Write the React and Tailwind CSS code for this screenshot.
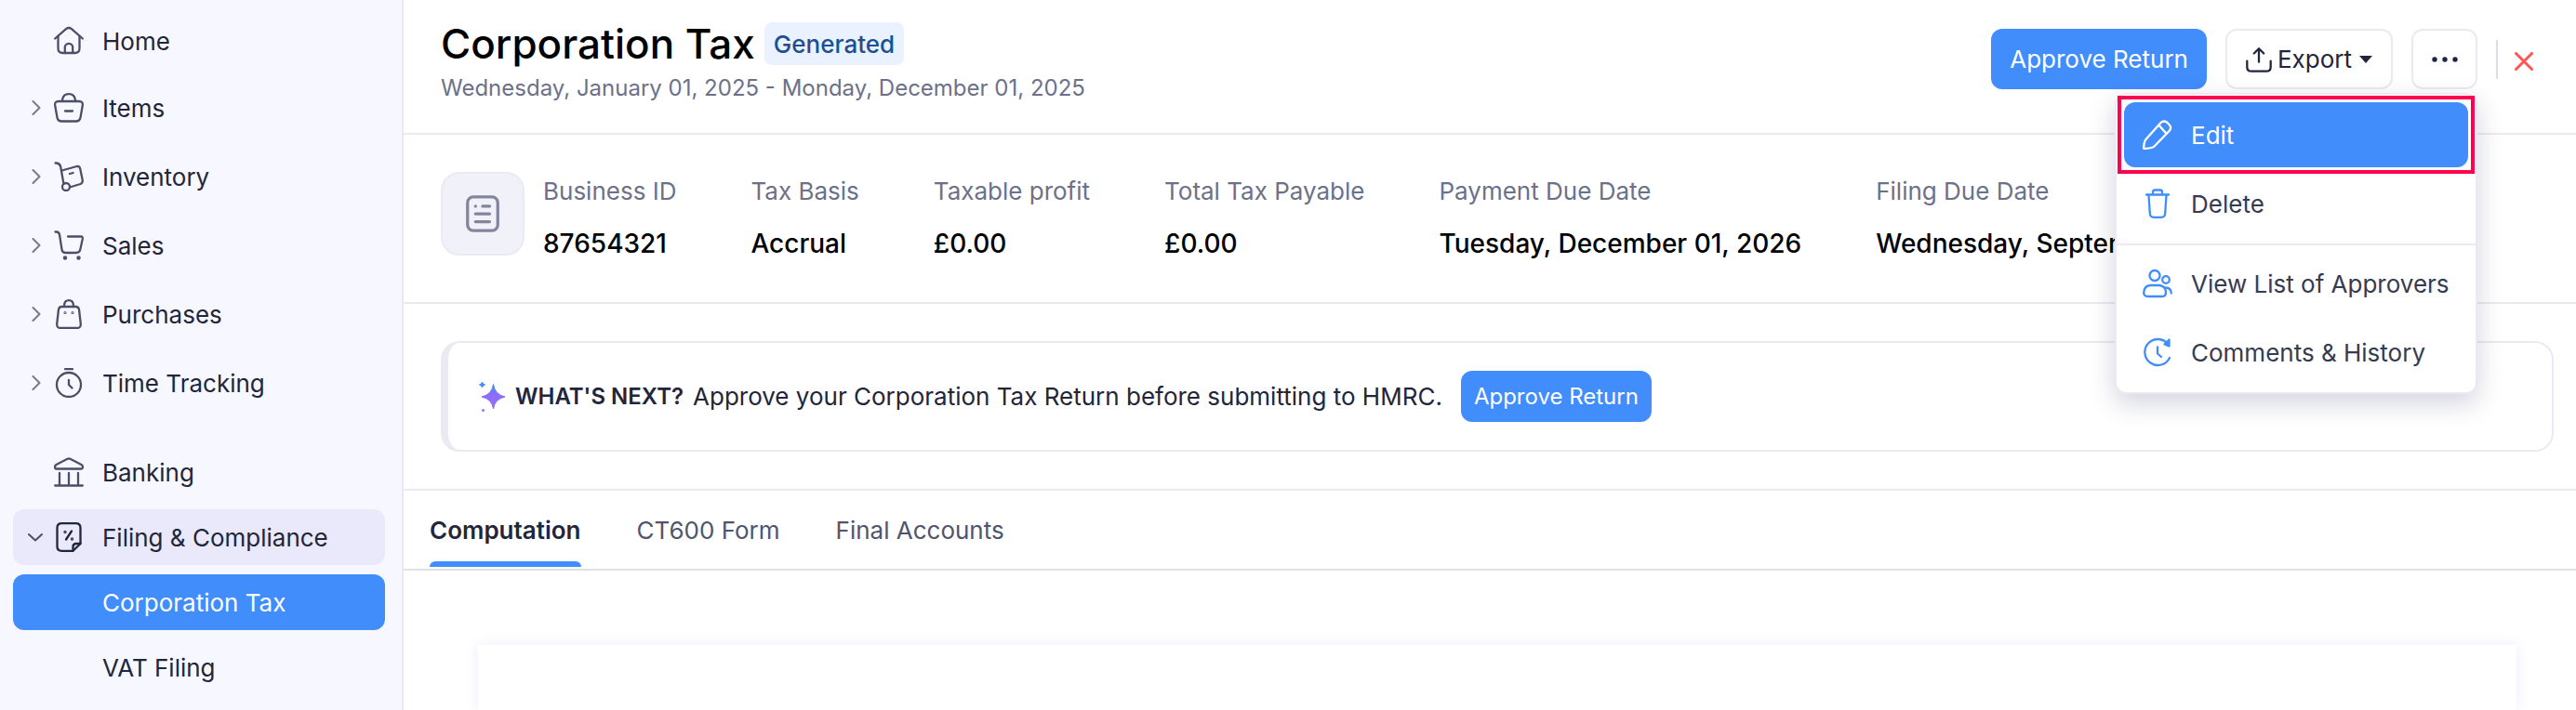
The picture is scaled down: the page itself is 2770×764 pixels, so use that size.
const Icon = ({ children, size = 32, width = 2.3, className = 'text-[#4b4f68]' }) => (
  <svg
    width={size}
    height={size}
    viewBox="0 0 32 32"
    fill="none"
    stroke="currentColor"
    strokeWidth={width}
    strokeLinecap="round"
    strokeLinejoin="round"
    className={`shrink-0 ${className}`}
    aria-hidden="true"
  >
    {children}
  </svg>
);

const icons = {
  home: (
    <>
      <path d="M1.200 13.500 13 3.200Q16 .8 19 3.200L30.800 13.500" />
      <path d="M4.500 11V24Q4.500 29 9.500 29H22.500Q27.500 29 27.500 24V11" />
      <path d="M11.800 29V23A4.200 4.200 0 0 1 20.200 23V29" />
    </>
  ),
  items: (
    <>
      <path d="M9 9V7.500Q10 1.200 16 1.200T23 7.500V9" />
      <path d="M5 9H27Q31.500 9 30.800 13.500L28.500 26.500Q27.800 30.500 23.500 30.500H8.500Q4.200 30.500 3.500 26.500L1.200 13.500Q.5 9 5 9Z" />
      <path d="M12 19.500H20" />
    </>
  ),
  inventory: (
    <>
      <path d="M1.500 1.500H3Q6.500 2 7.200 5.500L10.500 24" />
      <path d="M8.500 9.500 24.500 5Q27.500 4.500 28.200 7.500L30.800 20Q31 23 28.500 24L17 27.500" />
      <path d="M17 13 20.500 12" />
      <circle cx="13" cy="27" r="4" />
    </>
  ),
  sales: (
    <>
      <path d="M1.500 1.500H2.500Q5.500 1.500 6 4.500L8.500 20.500Q9 24 12.500 24H24Q27.500 24 28.300 20.500L30.800 9Q31.200 6.500 29 6.500H15" />
      <circle cx="12" cy="29.500" r="1.100" fill="currentColor" />
      <circle cx="26.500" cy="29.500" r="1.100" fill="currentColor" />
    </>
  ),
  purchases: (
    <>
      <path d="M11 8V6.500Q11.500 1.200 16 1.200T21 6.500V8" />
      <path d="M8.500 8H23.500Q26.500 8 27 11L28.800 26.500Q29 31 25 31H7Q3 31 3.200 26.500L5 11Q5.500 8 8.500 8Z" />
      <circle cx="12" cy="14.500" r=".4" fill="currentColor" />
      <circle cx="20" cy="14.500" r=".4" fill="currentColor" />
    </>
  ),
  time: (
    <>
      <circle cx="16" cy="18" r="13" />
      <path d="M12 1.200H20" />
      <path d="M16 13V18L19.500 21.500" />
    </>
  ),
  banking: (
    <>
      <path d="M14.500 1.800Q16 1.200 17.500 1.800L29.500 8Q31 9 31 10.500 31 12.500 29.500 12.500H2.500Q1 12.500 1 10.500 1 9 2.500 8Z" />
      <path d="M6 17V30M16 17V30M26 17V30M1.200 30.500H30.800" />
    </>
  ),
  filing: (
    <>
      <path d="M8.500 1.200H23.500Q28.500 1.200 28.500 6V23L20.500 30.800H8.500Q3.500 30.800 3.500 26V6Q3.500 1.200 8.500 1.200Z" />
      <path d="M20.500 30.800V26.500Q20.500 23 24 23H28.500" />
      <path d="M19 9.500 13 18.500" />
      <circle cx="12" cy="10.500" r=".5" fill="currentColor" />
      <circle cx="19.500" cy="18" r=".5" fill="currentColor" />
    </>
  ),
  edit: (
    <>
      <path d="M3 21.500 19.500 3Q22.500 .2 26 2.500L28.500 5Q31.500 8 29 11.500L12.500 28.500Q10.500 30.500 3.500 30.800H1.200Q1 25 3 21.500Z" />
      <path d="M17.500 5.800 25.500 14.800" />
    </>
  ),
  trash: (
    <>
      <path d="M4 6.500H28M11 6V3.500Q11 1.500 13 1.500H19Q21 1.500 21 3.500V6" />
      <path d="M6.500 7 7.800 26.500Q8 30.800 12 30.800H20Q24 30.800 24.200 26.500L25.500 7" />
    </>
  ),
  people: (
    <>
      <circle cx="13" cy="7.500" r="5.500" />
      <circle cx="25" cy="12" r="3.800" />
      <path d="M8.500 18H18Q25 19 25 25.500 25 30 21 30H5.500Q1.200 30 1.200 26 1.500 18.500 8.500 18Z" />
      <path d="M24.500 20.500Q30.500 20.500 30.800 26.500" />
    </>
  ),
  history: (
    <>
      <path d="M27.500 7.500A14 14 0 1 0 29 22" />
      <path d="M28.500 2.500V9.500L23.500 7.500Z" fill="currentColor" />
      <path d="M16 10.500V17.500L20 21" />
    </>
  ),
};

const Chevron = ({ open }) => (
  <svg
    width="16"
    height="16"
    viewBox="0 0 16 16"
    fill="none"
    stroke="currentColor"
    strokeWidth="2"
    strokeLinecap="round"
    strokeLinejoin="round"
    className={open ? 'text-[#4b4f68]' : 'text-[#77798f]'}
    aria-hidden="true"
  >
    <path d={open ? 'M1 5 8 11.500 15 5' : 'M5.500 1 12.500 8 5.500 15'} />
  </svg>
);

const NavItem = ({ icon, label, expandable, open }) => (
  <a
    href="#"
    className={`flex h-[60px] items-center rounded-xl pl-4 text-[26px] text-[#21263c] ${open ? 'bg-[#e9e9fb]' : ''}`}
  >
    <span className="mr-3 w-4">{expandable && <Chevron open={open} />}</span>
    <Icon className={open ? 'text-[#21263c]' : 'text-[#4b4f68]'}>{icons[icon]}</Icon>
    <span className="ml-5 whitespace-nowrap">{label}</span>
  </a>
);

const Sidebar = () => (
  <nav className="flex w-[434px] shrink-0 flex-col border-r-2 border-[#e8e8fb] bg-[#f7f7ff] pt-[14px] pr-[18px] pl-[14px]">
    <NavItem icon="home" label="Home" />
    <div className="mt-3 flex flex-col gap-[14px]">
      <NavItem icon="items" label="Items" expandable />
      <NavItem icon="inventory" label="Inventory" expandable />
      <NavItem icon="sales" label="Sales" expandable />
      <NavItem icon="purchases" label="Purchases" expandable />
      <NavItem icon="time" label="Time Tracking" expandable />
    </div>
    <div className="mt-9 flex flex-col gap-[10px]">
      <NavItem icon="banking" label="Banking" />
      <NavItem icon="filing" label="Filing & Compliance" expandable open />
      <a href="#" className="flex h-[60px] items-center rounded-xl bg-[#408dfb] pl-24 text-[26px] text-white">
        Corporation Tax
      </a>
      <a href="#" className="flex h-[60px] items-center rounded-xl pl-24 text-[26px] text-[#21263c]">
        VAT Filing
      </a>
    </div>
  </nav>
);

const MenuItem = ({ icon, label, active }) => (
  <button
    type="button"
    role="menuitem"
    className={`flex h-[70px] w-full items-center gap-5 rounded-xl px-5 text-[26px] whitespace-nowrap ${
      active ? 'bg-[#408dfb] text-white' : 'text-[#363b52]'
    }`}
  >
    <Icon className={active ? 'text-white' : 'text-[#408dfb]'}>{icons[icon]}</Icon>
    {label}
  </button>
);

const MoreMenu = () => (
  <div
    role="menu"
    className="absolute top-[69px] right-0 z-10 w-[390px] rounded-xl border-2 border-[#ebeaf2] bg-white py-2 shadow-[0_10px_28px_rgba(33,38,90,0.20)]"
  >
    <div className="flex flex-col gap-1 px-2 pb-2">
      <div className="relative">
        <MenuItem icon="edit" label="Edit" active />
        <span className="pointer-events-none absolute -inset-[7px] border-4 border-[#ff0050]" />
      </div>
      <MenuItem icon="trash" label="Delete" />
    </div>
    <div className="flex flex-col gap-1 border-t-2 border-[#ebeaf2] px-2 pt-[6px]">
      <MenuItem icon="people" label="View List of Approvers" />
      <MenuItem icon="history" label="Comments & History" />
    </div>
  </div>
);

const PageHeader = () => (
  <header className="flex h-[145px] items-start justify-between border-b-2 border-[#ebeaf2] pr-[46px] pl-10">
    <div className="pt-5">
      <div className="flex items-center gap-[10px]">
        <h1 className="text-[44px] leading-[54px] font-medium text-black">Corporation Tax</h1>
        <span className="flex h-[46px] items-center rounded-lg bg-[#ebf2ff] px-[10px] text-[26px] font-medium text-[#204e94]">
          Generated
        </span>
      </div>
      <p className="mt-1 text-[24px] leading-[34px] text-[#6c718a]">
        Wednesday, January 01, 2025 - Monday, December 01, 2025
      </p>
    </div>
    <div className="flex items-center pt-[31px]">
      <button type="button" className="h-[65px] rounded-xl bg-[#408dfb] px-5 text-[26px] text-white">
        Approve Return
      </button>
      <button
        type="button"
        className="ml-5 flex h-[65px] items-center rounded-xl border-2 border-[#ebeaf2] px-5 text-[26px] text-[#21263c]"
      >
        <Icon size={28} width={2.6} className="text-[#21263c]">
          <path d="M16 19V3M10 8.500 16 2.500 22 8.500M1.500 18V25Q1.500 30.500 7 30.500H25Q30.500 30.500 30.500 25V18" />
        </Icon>
        <span className="ml-[6px]">Export</span>
        <svg width="14" height="8" viewBox="0 0 14 8" fill="currentColor" className="ml-2" aria-hidden="true">
          <path d="M0 0H14L7 8Z" />
        </svg>
      </button>
      <div className="relative ml-5">
        <button
          type="button"
          aria-label="More actions"
          className="flex h-[65px] w-[71px] items-center justify-center rounded-xl border-2 border-[#ebeaf2] text-[#21263c]"
        >
          <svg width="28" height="6" viewBox="0 0 28 6" fill="currentColor" aria-hidden="true">
            <circle cx="3" cy="3" r="2.700" />
            <circle cx="14" cy="3" r="2.700" />
            <circle cx="25" cy="3" r="2.700" />
          </svg>
        </button>
        <MoreMenu />
      </div>
      <span className="mr-[18px] ml-5 h-[42px] w-[2px] bg-[#dddfe8]" />
      <button type="button" aria-label="Close" className="pt-1 text-[#ff5555]">
        <svg width="20" height="20" viewBox="0 0 20 20" fill="none" stroke="currentColor" strokeWidth="3" strokeLinecap="round">
          <path d="M1.500 1.500 18.500 18.500M18.500 1.500 1.500 18.500" />
        </svg>
      </button>
    </div>
  </header>
);

const fields = [
  { label: 'Business ID', value: '87654321' },
  { label: 'Tax Basis', value: 'Accrual' },
  { label: 'Taxable profit', value: '£0.00' },
  { label: 'Total Tax Payable', value: '£0.00' },
  { label: 'Payment Due Date', value: 'Tuesday, December 01, 2026' },
  { label: 'Filing Due Date', value: 'Wednesday, September 30, 2026' },
];

const Summary = () => (
  <section className="flex h-[182px] items-start border-b-2 border-[#ebeaf2] pt-10 pl-10">
    <div className="flex h-[90px] w-[90px] shrink-0 items-center justify-center rounded-[20px] border-2 border-[#ebeaf2] bg-[#f1f1fa]">
      <Icon size={40} width={2.6} className="text-[#83859c]">
        <rect x="3" y="1.500" width="26" height="29" rx="5" />
        <path d="M9.800 9.500H9.900M16 9.500H22M9.800 16H22M9.800 22.800H22" />
      </Icon>
    </div>
    <dl className="ml-5 flex gap-20">
      {fields.map(({ label, value }) => (
        <div key={label} className="whitespace-nowrap">
          <dt className="text-[26px] leading-[42px] text-[#6c718a]">{label}</dt>
          <dd className="mt-[14px] text-[28px] leading-[42px] font-medium text-black">{value}</dd>
        </div>
      ))}
    </dl>
  </section>
);

const WhatsNext = () => (
  <section className="border-b-2 border-[#ebeaf2] pt-10 pr-6 pb-10 pl-10">
    <div className="flex h-[119px] items-center rounded-[20px] border-2 border-l-8 border-[#ebeaf2] pl-8 text-[26px] text-[#21263c]">
      <svg width="30" height="34" viewBox="0 0 30 34" className="shrink-0" aria-hidden="true">
        <defs>
          <linearGradient id="spark" x1="0" y1="0" x2="0" y2="1">
            <stop offset="0" stopColor="#408dfb" />
            <stop offset=".45" stopColor="#8b6dfa" />
            <stop offset="1" stopColor="#9c6dfb" />
          </linearGradient>
        </defs>
        <path
          d="M16.500 3.500Q18 14.500 29 17 18 19.500 16.500 30 15 19.500 4 17 15 14.500 16.500 3.500Z"
          fill="url(#spark)"
          stroke="url(#spark)"
        />
        <path d="M4.500 1Q5 3.700 7.500 4 5 4.500 4.500 7 4 4.500 1.500 4 4 3.700 4.500 1Z" fill="#408dfb" stroke="#408dfb" />
        <circle cx="5.500" cy="31.500" r="1.500" fill="#9c6dfb" />
      </svg>
      <strong className="ml-[10px] text-[24px] font-semibold whitespace-nowrap">WHAT&apos;S NEXT?</strong>
      <span className="ml-[10px] whitespace-nowrap">Approve your Corporation Tax Return before submitting to HMRC.</span>
      <button
        type="button"
        className="ml-5 h-[55px] rounded-xl bg-[#408dfb] px-[14px] text-[24px] whitespace-nowrap text-white"
      >
        Approve Return
      </button>
    </div>
  </section>
);

const Tab = ({ label, active }) => (
  <button
    type="button"
    role="tab"
    aria-selected={Boolean(active)}
    className={`relative h-[84px] ${active ? 'font-semibold text-[#21263c]' : 'text-[#50546c]'}`}
  >
    {label}
    {active && <span className="absolute inset-x-0 bottom-[2px] h-[6px] rounded-t-md bg-[#408dfb]" />}
  </button>
);

const Tabs = () => (
  <div role="tablist" className="flex h-[86px] gap-[60px] border-b-2 border-[#dee2e6] pl-7 text-[26px]">
    <Tab label="Computation" active />
    <Tab label="CT600 Form" />
    <Tab label="Final Accounts" />
  </div>
);

export default function App() {
  return (
    <div className="flex h-screen overflow-hidden bg-white font-['Inter',sans-serif]">
      <Sidebar />
      <main className="flex min-w-0 flex-1 flex-col">
        <PageHeader />
        <Summary />
        <WhatsNext />
        <Tabs />
        <div className="flex flex-1 flex-col pt-20 pr-16 pl-20">
          <div className="flex-1 bg-white shadow-[0_0_12px_rgba(90,90,220,0.12)]" />
        </div>
      </main>
    </div>
  );
}
